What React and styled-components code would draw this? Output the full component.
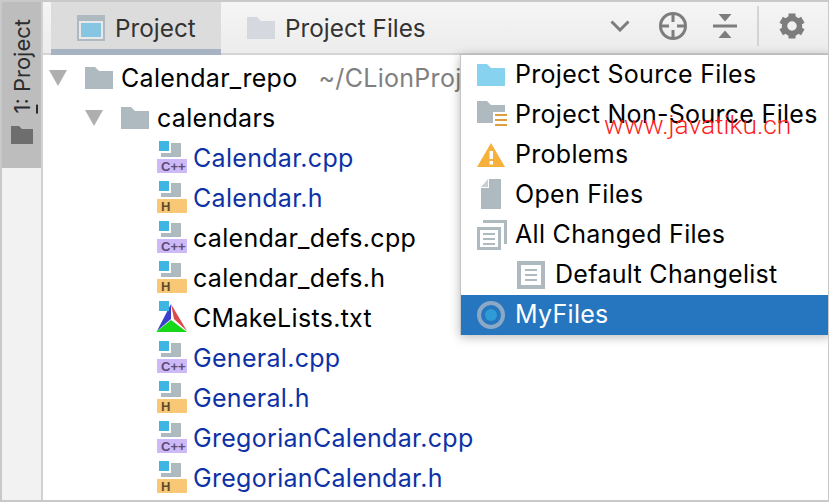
import React from 'react';
import styled, { createGlobalStyle } from 'styled-components';

const GlobalStyle = createGlobalStyle`
  html, body { margin: 0; padding: 0; background: #fff; }
  body { font-family: Inter, "Liberation Sans", Arial, sans-serif; }
`;

const Frame = styled.div`
  position: relative;
  box-sizing: border-box;
  width: 829px;
  height: 502px;
  display: flex;
  overflow: hidden;
  background: #fff;
  border: 2px solid #c9c9c9;
  border-right-width: 1px;
`;

const Sidebar = styled.div`
  width: 39px;
  flex: none;
  background: #f2f2f2;
  border-right: 2px solid #d1d1d1;
`;

const SideTab = styled.div`
  height: 166px;
  background: #bdbdbd;
  display: flex;
  flex-direction: column;
  align-items: center;
  padding-top: 17px;
  box-sizing: border-box;
  gap: 12px;
`;

const SideLabel = styled.div`
  writing-mode: vertical-rl;
  transform: rotate(180deg);
  font-size: 22px;
  line-height: 24px;
  color: #2c2c2c;
  white-space: nowrap;
  u { text-underline-offset: 2px; }
`;

const Main = styled.div`
  flex: 1;
  min-width: 0;
  display: flex;
  flex-direction: column;
`;

const Header = styled.div`
  height: 53px;
  flex: none;
  box-sizing: border-box;
  display: flex;
  align-items: stretch;
  padding-left: 8px;
  background: linear-gradient(#f5f5f5, #ececec);
  border-bottom: 2px solid #d4d4d4;
`;

const Tab = styled.div`
  width: ${p => p.$width}px;
  box-sizing: border-box;
  display: flex;
  align-items: center;
  gap: 10px;
  padding-left: 26px;
  margin-bottom: ${p => (p.$active ? '-2px' : '0')};
  padding-top: ${p => (p.$active ? '5px' : '0')};
  font-size: 24.3px;
  color: #333;
  background: ${p => (p.$active ? '#dcdcdc' : 'transparent')};
  border-bottom: ${p => (p.$active ? '6px solid #a7b3c3' : 'none')};
`;

const Tools = styled.div`
  margin-left: auto;
  display: flex;
  align-items: center;
  padding-right: 23px;
  padding-bottom: 3px;
`;

const ToolSep = styled.div`
  width: 2px;
  height: 40px;
  background: #d4d4d4;
  margin: 0 20px 0 20px;
`;

const ToolIcon = styled.svg`
  display: block;
  margin-left: ${p => p.$gap || 0}px;
`;

const Tree = styled.div`
  padding-top: 3px;
`;

const Row = styled.div`
  height: 40px;
  display: flex;
  align-items: center;
  padding-left: ${p => p.$indent}px;
  font-size: 25px;
  letter-spacing: 0.3px;
  white-space: nowrap;
  color: ${p => (p.$tracked ? '#0e32a6' : '#000')};
`;

const Label = styled.span`
  margin-top: ${p => p.$lift}px;
`;

const Path = styled(Label)`
  color: #808080;
  margin-left: 21px;
`;

const Arrow = styled.svg`
  flex: none;
  margin-right: 18px;
`;

const RowIcon = styled.svg`
  flex: none;
  overflow: visible;
  margin-right: ${p => p.$gap}px;
  margin-top: ${p => p.$lift || 0}px;
`;

const Popup = styled.div`
  position: absolute;
  left: 458px;
  top: 52px;
  width: 370px;
  background: #fff;
  border-left: 1px solid #c4c4c4;
  border-top: 1px solid #bcbcbc;
  box-shadow: 0 2px 10px rgba(0, 0, 0, 0.28);
`;

const PopupRow = styled.div`
  height: 40px;
  display: flex;
  align-items: center;
  gap: 10px;
  padding-left: ${p => (p.$nested ? 56 : 16)}px;
  font-size: 25px;
  letter-spacing: 0.3px;
  white-space: nowrap;
  color: ${p => (p.$selected ? '#fff' : '#000')};
  background: ${p => (p.$selected ? '#2675bf' : 'transparent')};
`;

const Watermark = styled.div`
  position: absolute;
  left: 602px;
  top: 109px;
  font-family: Roboto, "Liberation Sans", sans-serif;
  font-weight: 300;
  font-size: 26.4px;
  line-height: 28px;
  color: #ff1c1c;
  white-space: nowrap;
`;

const FolderShape = ({ color }) => (
  <RowIcon $gap={8} width="28" height="22" viewBox="0 0 28 22">
    <path d="M0 0H10L14 4H28V22H0Z" fill={color} />
  </RowIcon>
);

const TreeArrow = () => (
  <Arrow width="18" height="16" viewBox="0 0 18 16">
    <path d="M0 0H18L9 16Z" fill="#afafaf" />
  </Arrow>
);

const FileIcon = ({ kind }) => (
  <RowIcon $gap={6} $lift={-2} width="30" height="32" viewBox="-2 0 30 32">
    <path d="M12 2H22V16H2V12H12Z" fill="#afb9c0" />
    <rect x="0" y="0" width="10" height="10" fill="#3eb5e2" />
    <rect x="-2" y="18" width="30" height="14" fill={kind === 'cpp' ? '#cdb9f7' : '#f9c877'} />
    <text
      x="2"
      y="30"
      fontFamily="Liberation Sans, sans-serif"
      fontWeight="700"
      fontSize="13"
      letterSpacing="0"
      fill={kind === 'cpp' ? '#5b4d73' : '#5f4d2f'}
    >
      {kind === 'cpp' ? 'C++' : 'H'}
    </text>
  </RowIcon>
);

const CMakeIcon = () => (
  <RowIcon $gap={6} $lift={-2} width="30" height="32" viewBox="1 0 30 32">
    <path d="M15 3L1 30L15 18Z" fill="#3a3fcf" />
    <path d="M15 3L31 30L18 18Z" fill="#dc4b4b" />
    <path d="M0 31L15 19L31 31Z" fill="#17d818" />
    <rect x="3" y="0" width="10" height="10" fill="#3eb5e2" />
  </RowIcon>
);

const DocLines = ({ x, y, w, color = '#afb9c0' }) => (
  <path d={`M${x} ${y}h${w}v2h-${w}zM${x} ${y + 5}h${w}v2h-${w}zM${x} ${y + 10}h${w}v2h-${w}z`} fill={color} />
);

const PopIcon = styled.svg`
  flex: none;
  display: block;
  overflow: visible;
`;

const popupIcons = {
  source: (
    <PopIcon width="28" height="22" viewBox="0 0 28 22">
      <path d="M0 0H10L14 4H28V22H0Z" fill="#87d2ee" />
    </PopIcon>
  ),
  nonSource: (
    <PopIcon width="28" height="28" viewBox="0 0 28 28">
      <path d="M0 0H10L14 4H28V11H16V22H0Z" fill="#afb9c0" />
      <DocLines x={18} y={13} w={12} color="#dc9f3c" />
      <path d="M18 23h12v2H18z" fill="#dc9f3c" />
    </PopIcon>
  ),
  problems: (
    <PopIcon width="28" height="24" viewBox="0 0 28 24">
      <path d="M14 0L28 24H0Z" fill="#f6b13c" />
      <rect x="12.5" y="8" width="3.5" height="8" fill="#fff" />
      <rect x="12.5" y="18" width="3.5" height="3.5" fill="#fff" />
    </PopIcon>
  ),
  open: (
    <PopIcon width="28" height="32" viewBox="0 0 28 32">
      <path d="M12 0H24V30H4V9H12Z" fill="#afb9c0" />
      <path d="M11 0V8H4Z" fill="#c9d0d5" />
    </PopIcon>
  ),
  changed: (
    <PopIcon width="28" height="30" viewBox="0 0 28 30">
      <path d="M6 0H30V24H27V3H6Z" fill="#afb9c0" />
      <path fillRule="evenodd" d="M0 7H24V30H0ZM3 10V27H21V10Z" fill="#afb9c0" />
      <DocLines x={6} y={13} w={12} />
    </PopIcon>
  ),
  changelist: (
    <PopIcon width="28" height="28" viewBox="0 0 28 28">
      <path fillRule="evenodd" d="M0 0H28V28H0ZM4 4V24H24V4Z" fill="#afb9c0" />
      <DocLines x={8} y={8} w={12} />
    </PopIcon>
  ),
  scope: (
    <PopIcon width="28" height="28" viewBox="0 0 28 28">
      <circle cx="14" cy="14" r="12" fill="none" stroke="#8ba9c6" strokeWidth="4" />
      <circle cx="14" cy="14" r="6" fill="#2f9bd5" />
    </PopIcon>
  ),
};

const treeFiles = [
  ['cpp', 'Calendar.cpp', true],
  ['h', 'Calendar.h', true],
  ['cpp', 'calendar_defs.cpp', false],
  ['h', 'calendar_defs.h', false],
  ['cmake', 'CMakeLists.txt', false],
  ['cpp', 'General.cpp', true],
  ['h', 'General.h', true],
  ['cpp', 'GregorianCalendar.cpp', true],
  ['h', 'GregorianCalendar.h', true],
];

const scopes = [
  ['source', 'Project Source Files'],
  ['nonSource', 'Project Non-Source Files'],
  ['problems', 'Problems'],
  ['open', 'Open Files'],
  ['changed', 'All Changed Files'],
  ['changelist', 'Default Changelist', 'nested'],
  ['scope', 'MyFiles', 'selected'],
];

export default function App() {
  return (
    <>
      <GlobalStyle />
      <Frame>
        <Sidebar>
          <SideTab>
            <SideLabel><u>1</u>: Project</SideLabel>
            <svg width="22" height="18" viewBox="0 0 22 18">
              <path d="M0 0H8L11 3H22V18H0Z" fill="#6e6e6e" />
            </svg>
          </SideTab>
        </Sidebar>
        <Main>
          <Header>
            <Tab $active $width={170}>
              <svg width="28" height="26" viewBox="0 0 28 26">
                <rect width="28" height="26" fill="#aeb9c0" />
                <rect x="2" y="6" width="24" height="18" fill="#e8e8e8" />
                <rect x="4" y="8" width="20" height="14" fill="#87c6e2" />
              </svg>
              Project
            </Tab>
            <Tab $width={210}>
              <svg width="28" height="22" viewBox="0 0 28 22">
                <path d="M0 0H10L14 4H28V22H0Z" fill="#d5d9df" />
              </svg>
              Project Files
            </Tab>
            <Tools>
              <ToolIcon width="20" height="12" viewBox="0 0 20 12">
                <path d="M1.5 1.5L10 10L18.5 1.5" fill="none" stroke="#7d7d7d" strokeWidth="3" />
              </ToolIcon>
              <ToolIcon $gap={29} width="28" height="28" viewBox="0 0 28 28">
                <circle cx="14" cy="14" r="12.5" fill="none" stroke="#7d7d7d" strokeWidth="3" />
                <path d="M14 1V10M14 18V27M1 14H10M18 14H27" stroke="#7d7d7d" strokeWidth="3" />
              </ToolIcon>
              <ToolIcon $gap={26} width="24" height="24" viewBox="0 0 24 24">
                <path d="M0 10.5H24V13.5H0Z" fill="#7d7d7d" />
                <path d="M5.5 0H18.5L12 7.5ZM5.5 24H18.5L12 16.5Z" fill="#7d7d7d" />
              </ToolIcon>
              <ToolSep />
              <ToolIcon width="26" height="26" viewBox="0 0 26 26">
                <circle cx="13" cy="13" r="7.5" fill="none" stroke="#7d7d7d" strokeWidth="5.5" />
                {[0, 60, 120, 180, 240, 300].map(angle => (
                  <rect key={angle} x="9.5" y="0.5" width="7" height="6" fill="#7d7d7d" transform={`rotate(${angle} 13 13)`} />
                ))}
              </ToolIcon>
            </Tools>
          </Header>
          <Tree>
            <Row $indent={6}>
              <TreeArrow />
              <FolderShape color="#aeb9c0" />
              <Label $lift={0}>Calendar_repo</Label>
              <Path $lift={0}>~/CLionProjects/Calendar_repo</Path>
            </Row>
            <Row $indent={42}>
              <TreeArrow />
              <FolderShape color="#aeb9c0" />
              <Label $lift={0}>calendars</Label>
            </Row>
            {treeFiles.map(([kind, name, tracked]) => (
              <Row key={name} $indent={114} $tracked={tracked}>
                {kind === 'cmake' ? <CMakeIcon /> : <FileIcon kind={kind} />}
                <Label $lift={0}>{name}</Label>
              </Row>
            ))}
          </Tree>
        </Main>
        <Popup>
          {scopes.map(([icon, label, mode]) => (
            <PopupRow key={label} $nested={mode === 'nested'} $selected={mode === 'selected'}>
              {popupIcons[icon]}
              <Label $lift={-2}>{label}</Label>
            </PopupRow>
          ))}
        </Popup>
        <Watermark>www.javatiku.cn</Watermark>
      </Frame>
    </>
  );
}
